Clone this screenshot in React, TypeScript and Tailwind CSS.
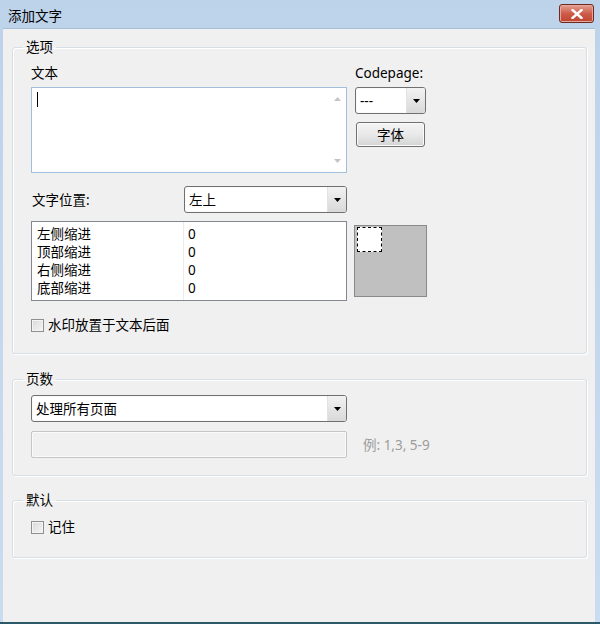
import React from "react";

const font = "font-['Noto_Sans','Noto_Sans_CJK_SC',sans-serif]";

function Arrow({ color = "#000" }: { color?: string }) {
  return (
    <svg width="7" height="4" viewBox="0 0 7 4">
      <path d="M0 0h7L3.5 4z" fill={color} />
    </svg>
  );
}

function Combo({ text, width }: { text: string; width: string }) {
  return (
    <div
      className={`${width} h-[27px] flex rounded-[3px] border border-[#707070] bg-white overflow-hidden shadow-[inset_0_0_0_1px_#fafafa]`}
    >
      <div className="flex-1 flex items-center pl-[4px] text-[13.5px] leading-[18px] text-black">{text}</div>
      <div className="w-[19px] flex items-center justify-center bg-gradient-to-b from-[#f2f2f2] to-[#d9d9d9] border-l border-[#e2e2e2]">
        <Arrow />
      </div>
    </div>
  );
}

function CheckBox({ label }: { label: string }) {
  return (
    <div className="flex items-center h-[18px] gap-[4px]">
      <div className="w-[13px] h-[13px] border border-[#8e8f8f] bg-gradient-to-br from-[#d8d8d8] to-[#f6f6f6] shadow-[inset_0_0_0_1px_#f4f4f4]" />
      <span className="text-[13.5px] leading-[18px] text-black">{label}</span>
    </div>
  );
}

function Group({ title, children, className = "" }: { title: string; children: React.ReactNode; className?: string }) {
  return (
    <fieldset
      className={`rounded-[3px] border border-[#d5dfe5] shadow-[inset_1px_1px_0_#ffffff,1px_1px_0_#ffffff] ${className}`}
    >
      <legend className="ml-[10px] px-[3px] text-[13.5px] leading-[18px] text-black">{title}</legend>
      {children}
    </fieldset>
  );
}

const indents = ["左侧缩进", "顶部缩进", "右侧缩进", "底部缩进"];

export default function App() {
  return (
    <div className={`w-[600px] h-[624px] flex flex-col bg-gradient-to-b from-[#bdd3ea] to-[#cadcef] border-b-2 border-[#2c5968] ${font}`}>
      {/* Title bar */}
      <div className="h-[28px] shrink-0 flex items-center pl-[8px] pr-[6px]">
        <span className="text-[13.5px] leading-[18px] text-black mt-[3px]">添加文字</span>
        <div className="ml-auto w-[35px] h-[19px] -mt-[1px] rounded-[3px] border border-[#6e2a22] bg-gradient-to-b from-[#e3a092] via-[#cd5c48] to-[#bf4430] flex items-center justify-center shadow-[inset_0_0_0_1px_#e6a699]">
          <svg width="12" height="10" viewBox="0 0 12 10">
            <path d="M1.5 1l9 8M10.5 1l-9 8" stroke="#ffffff" strokeWidth="2.4" strokeLinecap="square" />
          </svg>
        </div>
      </div>

      {/* Client area */}
      <div className="flex-1 ml-[3px] mr-[5px] bg-[#f0f0f0] border-t border-[#a9bfd6] pt-[9px] pl-[9px] pr-[8px]">
        <Group title="选项">
          <div className="pl-[18px] pt-[8px] pb-[19px]">
            <div className="flex">
              <div className="w-[316px]">
                <div className="text-[13.5px] leading-[18px] text-black">文本</div>
                <div className="mt-[5px] h-[86px] flex border border-[#a3bfda] bg-white">
                  <div className="flex-1 pl-[5px] pt-[4px]">
                    <div className="w-[1px] h-[15px] bg-black" />
                  </div>
                  <div className="w-[17px] flex flex-col items-center justify-between py-[9px]">
                    <svg width="7" height="4" viewBox="0 0 7 4">
                      <path d="M0 4h7L3.5 0z" fill="#c4c4c4" />
                    </svg>
                    <Arrow color="#c4c4c4" />
                  </div>
                </div>
              </div>
              <div className="ml-[8px]">
                <div className="text-[13.5px] leading-[18px] text-black">Codepage:</div>
                <div className="mt-[5px]">
                  <Combo text="---" width="w-[71px]" />
                </div>
                <div className="mt-[8px] ml-[1px] w-[69px] h-[25px] rounded-[3px] border border-[#707070] bg-gradient-to-b from-[#f4f4f4] via-[#e9e9e9] to-[#d4d4d4] shadow-[inset_0_0_0_1px_#fbfbfb] flex items-center justify-center text-[13.5px] leading-[18px] text-black">
                  字体
                </div>
              </div>
            </div>

            <div className="mt-[13px] flex items-center">
              <div className="w-[153px] pl-[1px] text-[13.5px] leading-[18px] text-black">文字位置:</div>
              <Combo text="左上" width="w-[163px]" />
            </div>

            <div className="mt-[8px] flex items-start">
              <div className="w-[316px] h-[80px] border border-[#828790] bg-white flex">
                <div className="w-[152px] border-r border-[#ececec] pt-[3px] pl-[5px]">
                  {indents.map((t) => (
                    <div key={t} className="text-[13.5px] leading-[18px] text-black">
                      {t}
                    </div>
                  ))}
                </div>
                <div className="flex-1 pt-[3px] pl-[4px]">
                  {indents.map((t) => (
                    <div key={t} className="text-[13.5px] leading-[18px] text-black">
                      0
                    </div>
                  ))}
                </div>
              </div>
              <div className="ml-[7px] mt-[4px] w-[73px] h-[72px] border border-[#8a8a8a] bg-[#c0c0c0] pl-[2px] pt-[1px]">
                <div className="w-[25px] h-[25px] bg-white border border-dashed border-black" />
              </div>
            </div>

            <div className="mt-[15px]">
              <CheckBox label="水印放置于文本后面" />
            </div>
          </div>
        </Group>

        <Group title="页数" className="mt-[16px]">
          <div className="pl-[18px] pt-[7px] pb-[17px]">
            <Combo text="处理所有页面" width="w-[316px]" />
            <div className="mt-[9px] flex items-center">
              <div className="w-[316px] h-[27px] rounded-[2px] border border-[#c3c6c9] bg-[#f0f0f0] shadow-[inset_0_0_0_1px_#fafafa]" />
              <span className="ml-[16px] text-[13.5px] leading-[18px] text-[#9c9c9c]">例: 1,3, 5-9</span>
            </div>
          </div>
        </Group>

        <Group title="默认" className="mt-[15px]">
          <div className="pl-[18px] pt-[9px] pb-[21px]">
            <CheckBox label="记住" />
          </div>
        </Group>
      </div>
    </div>
  );
}
